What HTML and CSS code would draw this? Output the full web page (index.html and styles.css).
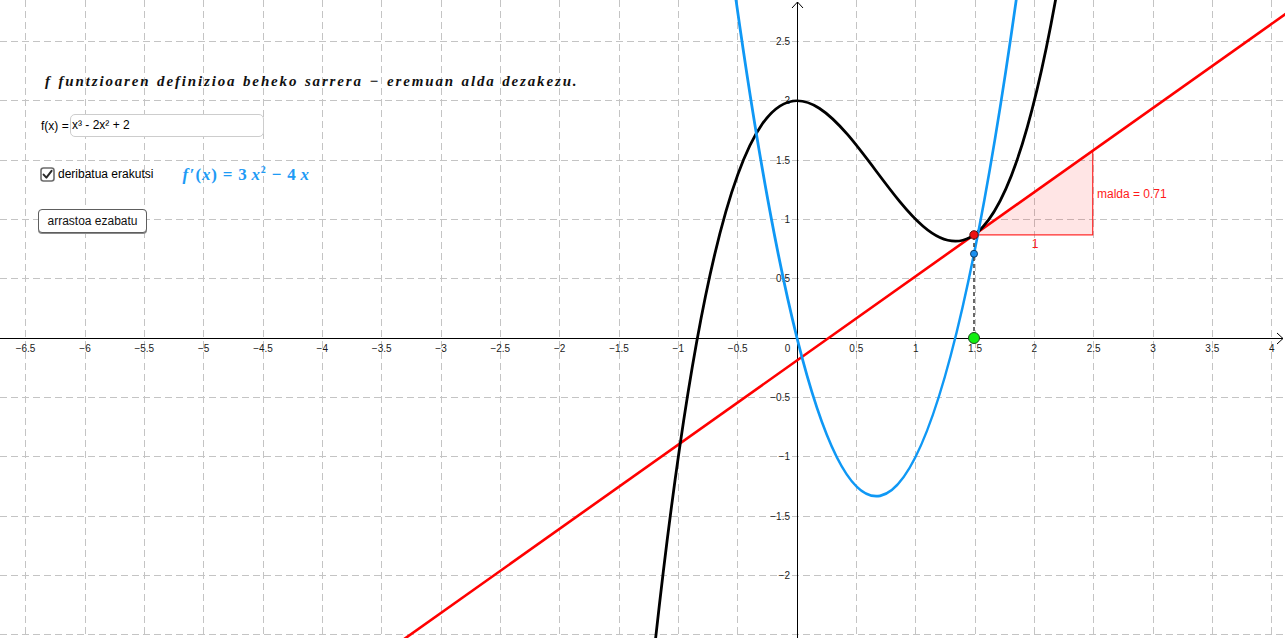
FILE: index.html
```html
<!DOCTYPE html>
<html lang="eu">
<head>
<meta charset="utf-8">
<title>Deribatua</title>
<link rel="stylesheet" href="styles.css">
</head>
<body>
<div class="applet">
  <svg class="graph" width="1285" height="638" viewBox="0 0 1285 638" xmlns="http://www.w3.org/2000/svg">
    <g class="grid">
      <line x1="25.5" y1="0" x2="25.5" y2="638"/>
      <line x1="85.5" y1="0" x2="85.5" y2="638"/>
      <line x1="144.5" y1="0" x2="144.5" y2="638"/>
      <line x1="203.5" y1="0" x2="203.5" y2="638"/>
      <line x1="263.5" y1="0" x2="263.5" y2="638"/>
      <line x1="322.5" y1="0" x2="322.5" y2="638"/>
      <line x1="381.5" y1="0" x2="381.5" y2="638"/>
      <line x1="441.5" y1="0" x2="441.5" y2="638"/>
      <line x1="500.5" y1="0" x2="500.5" y2="638"/>
      <line x1="559.5" y1="0" x2="559.5" y2="638"/>
      <line x1="619.5" y1="0" x2="619.5" y2="638"/>
      <line x1="678.5" y1="0" x2="678.5" y2="638"/>
      <line x1="737.5" y1="0" x2="737.5" y2="638"/>
      <line x1="856.5" y1="0" x2="856.5" y2="638"/>
      <line x1="915.5" y1="0" x2="915.5" y2="638"/>
      <line x1="975.5" y1="0" x2="975.5" y2="638"/>
      <line x1="1034.5" y1="0" x2="1034.5" y2="638"/>
      <line x1="1093.5" y1="0" x2="1093.5" y2="638"/>
      <line x1="1153.5" y1="0" x2="1153.5" y2="638"/>
      <line x1="1212.5" y1="0" x2="1212.5" y2="638"/>
      <line x1="1271.5" y1="0" x2="1271.5" y2="638"/>
      <line x1="0" y1="41.5" x2="1285" y2="41.5"/>
      <line x1="0" y1="100.5" x2="1285" y2="100.5"/>
      <line x1="0" y1="160.5" x2="1285" y2="160.5"/>
      <line x1="0" y1="219.5" x2="1285" y2="219.5"/>
      <line x1="0" y1="278.5" x2="1285" y2="278.5"/>
      <line x1="0" y1="397.5" x2="1285" y2="397.5"/>
      <line x1="0" y1="456.5" x2="1285" y2="456.5"/>
      <line x1="0" y1="516.5" x2="1285" y2="516.5"/>
      <line x1="0" y1="575.5" x2="1285" y2="575.5"/>
      <line x1="0" y1="634.5" x2="1285" y2="634.5"/>
    </g>
    <g class="axes">
      <line x1="0" y1="338.5" x2="1283" y2="338.5"/>
      <polyline points="1277,333 1283,338.5 1277,344"/>
      <line x1="797.5" y1="638" x2="797.5" y2="2"/>
      <polyline points="792,8 797.5,2 803,8"/>
    </g>
    <g class="xlabels">
      <text x="25.5" y="352">−6.5</text>
      <text x="85" y="352">−6</text>
      <text x="144.3" y="352">−5.5</text>
      <text x="203.7" y="352">−5</text>
      <text x="263" y="352">−4.5</text>
      <text x="322.3" y="352">−4</text>
      <text x="381.7" y="352">−3.5</text>
      <text x="441" y="352">−3</text>
      <text x="500.3" y="352">−2.5</text>
      <text x="559.7" y="352">−2</text>
      <text x="619" y="352">−1.5</text>
      <text x="678.3" y="352">−1</text>
      <text x="737.7" y="352">−0.5</text>
      <text x="787.5" y="352">0</text>
      <text x="856.3" y="352">0.5</text>
      <text x="915.7" y="352">1</text>
      <text x="975" y="352">1.5</text>
      <text x="1034.3" y="352">2</text>
      <text x="1093.7" y="352">2.5</text>
      <text x="1153" y="352">3</text>
      <text x="1212.3" y="352">3.5</text>
      <text x="1271.7" y="352">4</text>
    </g>
    <g class="ylabels">
      <text x="790" y="45">2.5</text>
      <text x="790" y="104.3">2</text>
      <text x="790" y="163.6">1.5</text>
      <text x="790" y="223">1</text>
      <text x="790" y="282.3">0.5</text>
      <text x="790" y="401">−0.5</text>
      <text x="790" y="460.3">−1</text>
      <text x="790" y="519.6">−1.5</text>
      <text x="790" y="579">−2</text>
    </g>
    <polygon class="slope-fill" points="974.03,234.87 1092.7,234.87 1092.7,150.71"/>
    <polyline class="slope-edge" points="974.03,234.87 1092.7,234.87 1092.7,150.71"/>
    <g transform="matrix(118.67 0 0 -118.67 797 338)">
      <path class="tangent" vector-effect="non-scaling-stroke" d="M -4 -3.02582 L 4.5 3.00247"/>
      <path class="fcurve" vector-effect="non-scaling-stroke" d="M -1.25 -3.078125 C -0.083333 8.223958, 1.083333 -3.953125, 2.25 3.265625"/>
      <path class="dcurve" vector-effect="non-scaling-stroke" d="M -0.7 4.27 Q 0.7 -7.21 2.1 4.83"/>
    </g>
    <line class="drop" x1="974" y1="338" x2="974" y2="236"/>
    <text class="slope-label" x="1035" y="248" text-anchor="middle">1</text>
    <text class="slope-label" x="1097" y="198">malda = 0.71</text>
    <circle class="pt-blue" cx="974" cy="253.8" r="3.5"/>
    <circle class="pt-red" cx="974" cy="234.9" r="4.2"/>
    <circle class="pt-green" cx="974" cy="338" r="5.5"/>
  </svg>

  <div class="controls">
    <p class="title">f funtzioaren definizioa beheko sarrera − eremuan alda dezakezu.</p>
    <div class="fx-row">
      <span class="fx-label">f(x) =</span>
      <div class="fx-input">x³ - 2x² + 2</div>
    </div>
    <div class="check-row">
      <span class="checkbox">
        <svg width="15" height="15" viewBox="0 0 15 15" xmlns="http://www.w3.org/2000/svg">
          <rect x="1" y="1" width="13" height="13" rx="2.5" class="cb-box"/>
          <path d="M3.6 7.6 L6.4 10.6 L11.6 3.8" class="cb-tick"/>
        </svg>
      </span>
      <span class="check-text">deribatua erakutsi</span>
      <span class="deriv"><i>f</i><span class="prime">′</span><span class="up">(</span><i>x</i><span class="up">)</span><span class="op">=</span><span class="up">3</span><i class="sp">x</i><sup class="up">2</sup><span class="op">−</span><span class="up">4</span><i class="sp">x</i></span>
    </div>
    <div class="button-row">
      <span class="button">arrastoa ezabatu</span>
    </div>
  </div>
</div>
</body>
</html>
```

FILE: styles.css
```css
html, body {
  margin: 0;
  padding: 0;
  background: #ffffff;
}

.applet {
  display: grid;
  width: 1285px;
  height: 638px;
  overflow: hidden;
  font-family: "Liberation Sans", Arial, sans-serif;
}

.applet > * {
  grid-area: 1 / 1;
}

.graph {
  display: block;
}

.grid line {
  stroke: #c4c4c4;
  stroke-width: 1;
  stroke-dasharray: 7 4;
}

.axes line,
.axes polyline {
  stroke: #000;
  stroke-width: 1;
  fill: none;
}

.xlabels text {
  font-family: "Liberation Sans", Arial, sans-serif;
  font-size: 10px;
  fill: #1a1a1a;
  text-anchor: middle;
}

.ylabels text {
  font-family: "Liberation Sans", Arial, sans-serif;
  font-size: 10px;
  fill: #1a1a1a;
  text-anchor: end;
}

.slope-fill {
  fill: #ff0000;
  fill-opacity: 0.1;
  stroke: none;
}

.slope-edge {
  fill: none;
  stroke: #ff2a2a;
  stroke-width: 1.2;
}

.tangent {
  fill: none;
  stroke: #ff0000;
  stroke-width: 2.6;
}

.fcurve {
  fill: none;
  stroke: #000;
  stroke-width: 2.8;
}

.dcurve {
  fill: none;
  stroke: #0f98f5;
  stroke-width: 2.8;
}

.drop {
  stroke: #444;
  stroke-width: 1.6;
  stroke-dasharray: 4 3;
}

.slope-label {
  font-family: "Liberation Sans", Arial, sans-serif;
  font-size: 12px;
  fill: #ff1a1a;
}

.pt-red {
  fill: #ee1111;
  stroke: #5a1010;
  stroke-width: 1;
}

.pt-blue {
  fill: #1a8ff0;
  stroke: #0d3c66;
  stroke-width: 1;
}

.pt-green {
  fill: #11ee11;
  stroke: #1b4d1b;
  stroke-width: 1;
}

/* controls overlay */
.controls {
  display: flex;
  flex-direction: column;
  align-items: flex-start;
  padding: 71px 0 0 41px;
  pointer-events: none;
  color: #000;
}

.title {
  margin: 0 0 0 4px;
  font-family: "Liberation Serif", "Times New Roman", serif;
  font-style: italic;
  font-weight: bold;
  font-size: 15px;
  line-height: 20px;
  letter-spacing: 1.85px;
  word-spacing: 1px;
  color: #111;
  white-space: nowrap;
}

.fx-row {
  display: flex;
  align-items: center;
  margin-top: 23px;
  height: 23px;
}

.fx-label {
  font-size: 12px;
  width: 29px;
}

.fx-input {
  box-sizing: border-box;
  width: 194px;
  height: 23px;
  border: 1.5px solid #cdcdcd;
  border-radius: 5px;
  background: #fff;
  font-size: 12px;
  line-height: 20px;
  padding-left: 1px;
}

.check-row {
  display: flex;
  align-items: center;
  height: 24px;
  margin-top: 25px;
  margin-left: -1px;
}

.checkbox {
  display: flex;
  width: 15px;
  height: 15px;
}

.cb-box {
  fill: #fff;
  stroke: #6b6b6b;
  stroke-width: 1.6;
}

.cb-tick {
  fill: none;
  stroke: #2a2a2a;
  stroke-width: 2;
  stroke-linecap: round;
  stroke-linejoin: round;
}

.check-text {
  font-size: 12px;
  margin-left: 3px;
}

.deriv {
  margin-left: 29px;
  font-family: "Liberation Serif", "Times New Roman", serif;
  font-weight: bold;
  font-size: 17px;
  color: #1e9bf5;
  white-space: nowrap;
  letter-spacing: 0.8px;
}

.deriv i {
  font-style: italic;
}

.deriv .up {
  font-style: normal;
}

.deriv .prime {
  font-style: normal;
  margin-left: 1px;
}

.deriv .op {
  font-style: normal;
  margin: 0 5px;
}

.deriv .sp {
  margin-left: 4px;
}

.deriv sup {
  font-size: 10px;
  vertical-align: 7px;
}

.button-row {
  display: flex;
  margin-top: 23px;
  margin-left: -3px;
}

.button {
  box-sizing: border-box;
  width: 109px;
  height: 24px;
  border: 1px solid #5e5e5e;
  border-radius: 4px;
  background: #fff;
  box-shadow: 0 1px 0 #8a8a8a;
  font-size: 12px;
  line-height: 22px;
  text-align: center;
  color: #111;
}
```
